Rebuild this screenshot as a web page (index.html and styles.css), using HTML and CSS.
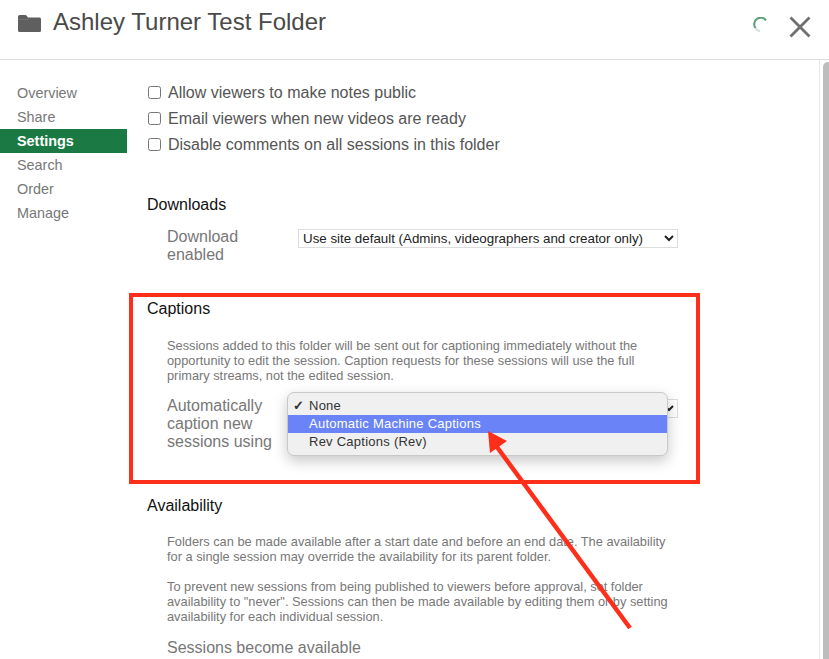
FILE: index.html
```html
<!DOCTYPE html>
<html lang="en">
<head>
<meta charset="utf-8">
<title>Ashley Turner Test Folder</title>
<link rel="stylesheet" href="styles.css">
</head>
<body>
<div class="page">
  <header class="header">
    <svg class="folder" viewBox="0 0 23 17" width="23" height="17"><path d="M1.500 0H8l2 2.500h11.500A1.500 1.500 0 0 1 23 4v11.500A1.500 1.500 0 0 1 21.500 17h-20A1.500 1.500 0 0 1 0 15.500V1.500A1.500 1.500 0 0 1 1.500 0z" fill="#5f5f5f"/><path d="M0 4.500h10L11 3" fill="none" stroke="#787878" stroke-width=".7"/></svg>
    <h1 class="title">Ashley Turner Test Folder</h1>
    <svg class="spinner" viewBox="0 0 16 16" width="16" height="16"><path d="M14 3.300A6.200 6.200 0 0 0 3.500 11" fill="none" stroke="#5d9e78" stroke-width="2"/><path d="M3.500 11a6.200 6.200 0 0 0 4.500 3.200" fill="none" stroke="#cfe3d7" stroke-width="2"/></svg>
    <svg class="close" viewBox="0 0 22 22" width="22" height="22"><path d="M1.500 1.500l19 19M20.500 1.500l-19 19" stroke="#707070" stroke-width="2.800" fill="none"/></svg>
  </header>
  <div class="layout">
    <nav class="nav">
      <a class="nav-item">Overview</a>
      <a class="nav-item">Share</a>
      <a class="nav-item active">Settings</a>
      <a class="nav-item">Search</a>
      <a class="nav-item">Order</a>
      <a class="nav-item">Manage</a>
    </nav>
    <main class="main">
      <div class="checks">
        <label class="check"><input type="checkbox">Allow viewers to make notes public</label>
        <label class="check"><input type="checkbox">Email viewers when new videos are ready</label>
        <label class="check"><input type="checkbox">Disable comments on all sessions in this folder</label>
      </div>
      <section class="section downloads">
        <h2 class="heading">Downloads</h2>
        <div class="field">
          <label class="field-label">Download enabled</label>
          <select class="select"><option>Use site default (Admins, videographers and creator only)</option></select>
        </div>
      </section>
      <section class="section captions">
        <h2 class="heading">Captions</h2>
        <p class="desc">Sessions added to this folder will be sent out for captioning immediately without the opportunity to edit the session. Caption requests for these sessions will use the full primary streams, not the edited session.</p>
        <div class="field caption-field">
          <label class="field-label">Automatically caption new sessions using</label>
          <select class="select"><option>None</option></select>
          <ul class="menu">
            <li class="menu-item"><span class="tick">✓</span>None</li>
            <li class="menu-item selected">Automatic Machine Captions</li>
            <li class="menu-item">Rev Captions (Rev)</li>
          </ul>
        </div>
      </section>
      <section class="section availability">
        <h2 class="heading">Availability</h2>
        <p class="desc">Folders can be made available after a start date and before an end date. The availability for a single session may override the availability for its parent folder.</p>
        <p class="desc">To prevent new sessions from being published to viewers before approval, set folder availability to "never". Sessions can then be made available by editing them or by setting availability for each individual session.</p>
        <div class="field-label wide">Sessions become available</div>
      </section>
    </main>
    <div class="scrollbar"><div class="thumb"></div></div>
  </div>
  <div class="callout"></div>
  <svg class="arrow" viewBox="0 0 829 659" width="829" height="659"><path d="M630 628L497 447" stroke="#fe2f1a" stroke-width="4.500" fill="none"/><path d="M488 431L507 441L490 453z" fill="#fe2f1a"/></svg>
</div>
</body>
</html>
```
FILE: styles.css
```css
* { box-sizing: border-box; }
html, body { margin: 0; padding: 0; background: #fff; overflow: hidden; }
body { font-family: "Liberation Sans", Arial, sans-serif; color: #555; }
.page { position: relative; width: 829px; height: 659px; overflow: hidden; }
.header { height: 60px; border-bottom: 1px solid #ddd; display: flex; align-items: flex-start; padding: 15px 18px 0 18px; }
.folder { margin: 0 12px 0 0; flex: none; }
.title { margin: -7px 0 0; font-size: 24px; line-height: 28px; font-weight: 400; color: #4a4a4a; flex: 1; }
.spinner { margin: 2px 21px 0 0; }
.close { margin: 1px 0 0; }
.layout { display: flex; height: 599px; }
.nav { width: 127px; flex: none; padding-top: 21px; display: flex; flex-direction: column; }
.nav-item { height: 24px; line-height: 24px; padding-left: 17px; font-size: 14.400px; color: #777; }
.nav-item.active { background: #1b7a43; color: #fff; font-weight: 700; }
.main { width: 693px; flex: none; padding: 21px 0 0 20px; border-right: 1px solid #e8e8e8; }
.checks { display: flex; flex-direction: column; gap: 2px; }
.check { display: flex; align-items: center; height: 24px; font-size: 16px; color: #555; }
.check input { width: 13px; height: 13px; margin: -2px 7px 0 1px; appearance: none; border: 1px solid #767676; border-radius: 2.500px; background: #fff; }
.heading { margin: 0; font-size: 16px; line-height: 20px; font-weight: 400; color: #111; }
.section { width: 531px; }
.downloads { margin-top: 38px; }
.field { display: flex; align-items: flex-start; padding-left: 20px; margin-top: 13px; }
.field-label { width: 131px; flex: none; font-size: 16px; line-height: 18px; color: #777; }
.select { width: 380px; height: 19px; border: 1px solid #ddd; border-radius: 0; background: #fff; font-family: "Liberation Sans", Arial, sans-serif; font-size: 13.333px; color: #222; padding: 0; margin-top: 1px; }
.captions { margin-top: 35px; }
.desc { margin: 0 0 0 20px; font-size: 12.800px; line-height: 15px; color: #777; width: 505px; }
.captions .desc { margin-top: 19px; }
.caption-field { position: relative; margin-top: 14px; }
.caption-field .select { width: 380px; margin-top: 2px; }
.menu { position: absolute; left: 140px; top: -5px; width: 381px; height: 64px; margin: 0; padding: 4px 0; list-style: none; background: #f0f0f0; border: 1px solid #c8c8c8; border-radius: 7px; box-shadow: 0 5px 14px rgba(0,0,0,.22); }
.menu-item { position: relative; height: 18px; line-height: 18px; padding-left: 21px; font-size: 13px; color: #333; letter-spacing: .25px; }
.menu-item.selected { background: #6a84f7; color: #fff; }
.tick { position: absolute; left: 5px; font-size: 13px; font-weight: 700; }
.availability { margin-top: 45px; }
.availability .desc { margin-top: 18px; }
.availability .desc + .desc { margin-top: 15px; }
.wide { width: auto; margin: 15px 0 0 20px; }
.scrollbar { flex: 1; padding-top: 2px; background: #fff; }
.thumb { height: 597px; background: #bdbdbd; border-radius: 5px 0 0 0; margin-left: 3px; }
.callout { position: absolute; left: 129px; top: 293px; width: 571px; height: 191px; border: 4px solid #fe2f1a; pointer-events: none; }
.arrow { position: absolute; left: 0; top: 0; pointer-events: none; }
```
